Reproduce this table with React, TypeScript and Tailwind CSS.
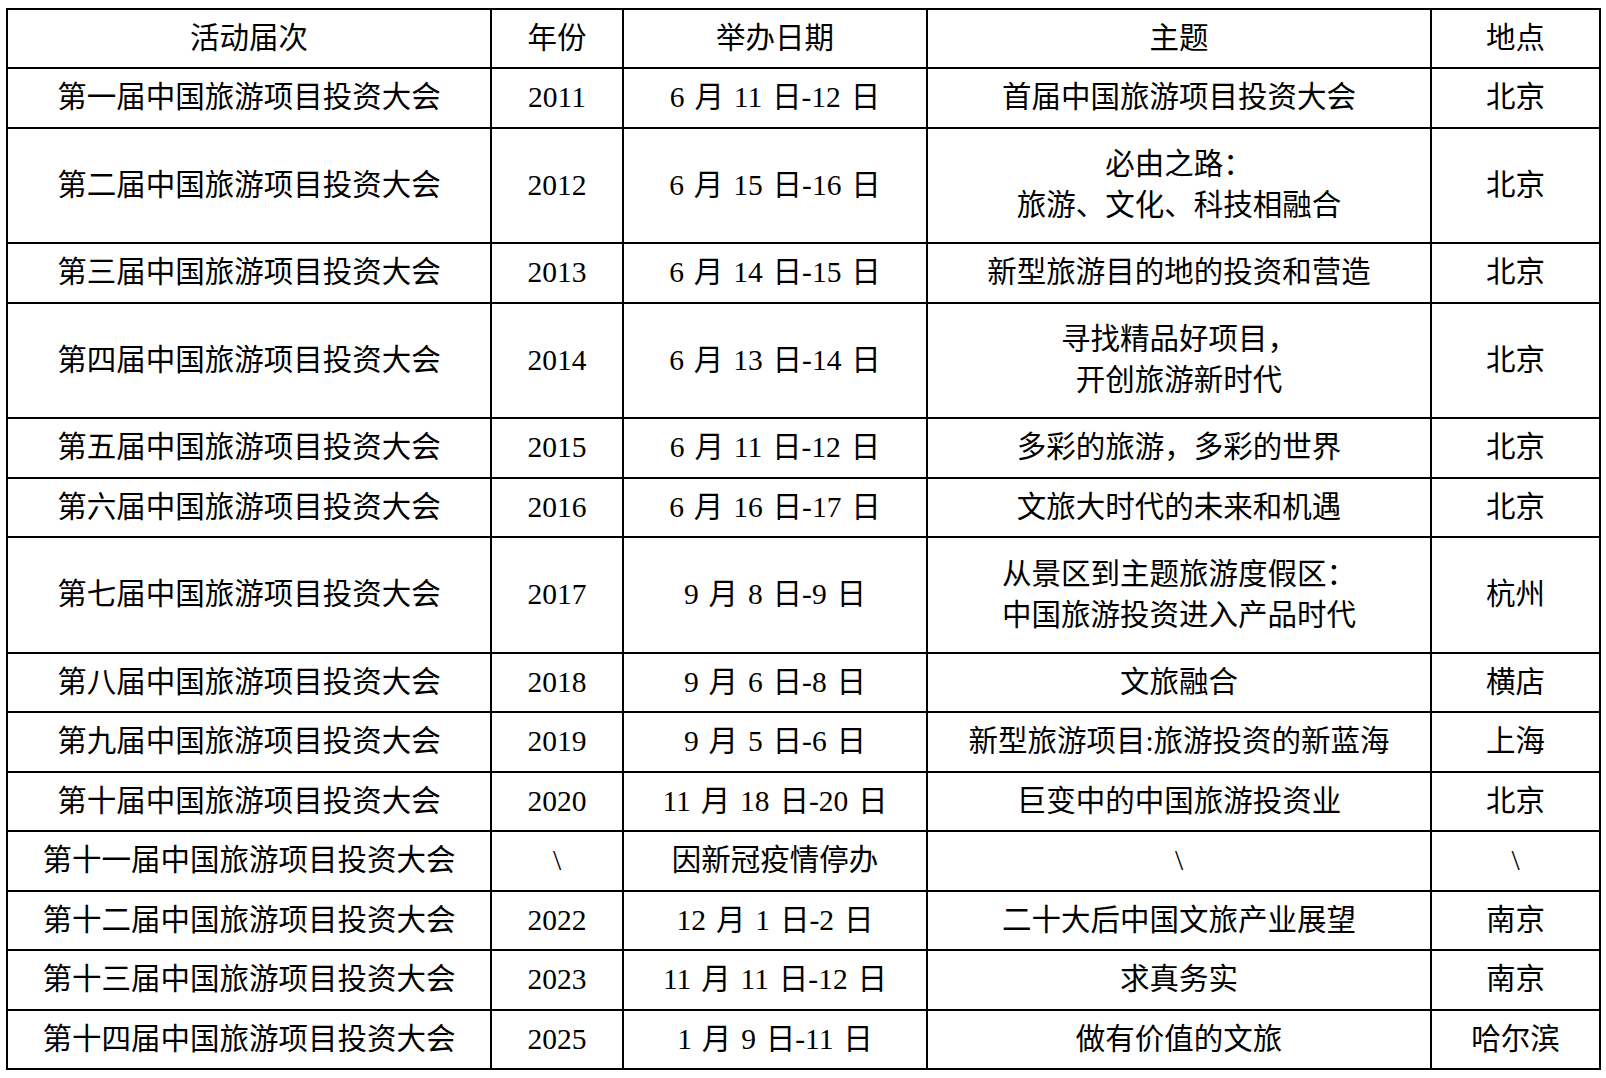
import React from "react";

type Row = { name: string; year: string; date: string; theme: string[]; place: string };

const rows: Row[] = [
  { name: "第一届中国旅游项目投资大会", year: "2011", date: "6 月 11 日-12 日", theme: ["首届中国旅游项目投资大会"], place: "北京" },
  { name: "第二届中国旅游项目投资大会", year: "2012", date: "6 月 15 日-16 日", theme: ["必由之路：", "旅游、文化、科技相融合"], place: "北京" },
  { name: "第三届中国旅游项目投资大会", year: "2013", date: "6 月 14 日-15 日", theme: ["新型旅游目的地的投资和营造"], place: "北京" },
  { name: "第四届中国旅游项目投资大会", year: "2014", date: "6 月 13 日-14 日", theme: ["寻找精品好项目，", "开创旅游新时代"], place: "北京" },
  { name: "第五届中国旅游项目投资大会", year: "2015", date: "6 月 11 日-12 日", theme: ["多彩的旅游，多彩的世界"], place: "北京" },
  { name: "第六届中国旅游项目投资大会", year: "2016", date: "6 月 16 日-17 日", theme: ["文旅大时代的未来和机遇"], place: "北京" },
  { name: "第七届中国旅游项目投资大会", year: "2017", date: "9 月 8 日-9 日", theme: ["从景区到主题旅游度假区：", "中国旅游投资进入产品时代"], place: "杭州" },
  { name: "第八届中国旅游项目投资大会", year: "2018", date: "9 月 6 日-8 日", theme: ["文旅融合"], place: "横店" },
  { name: "第九届中国旅游项目投资大会", year: "2019", date: "9 月 5 日-6 日", theme: ["新型旅游项目:旅游投资的新蓝海"], place: "上海" },
  { name: "第十届中国旅游项目投资大会", year: "2020", date: "11 月 18 日-20 日", theme: ["巨变中的中国旅游投资业"], place: "北京" },
  { name: "第十一届中国旅游项目投资大会", year: "\\", date: "因新冠疫情停办", theme: ["\\"], place: "\\" },
  { name: "第十二届中国旅游项目投资大会", year: "2022", date: "12 月 1 日-2 日", theme: ["二十大后中国文旅产业展望"], place: "南京" },
  { name: "第十三届中国旅游项目投资大会", year: "2023", date: "11 月 11 日-12 日", theme: ["求真务实"], place: "南京" },
  { name: "第十四届中国旅游项目投资大会", year: "2025", date: "1 月 9 日-11 日", theme: ["做有价值的文旅"], place: "哈尔滨" },
];

const cell = "border-2 border-black text-center align-middle p-0 whitespace-nowrap";

export default function App() {
  return (
    <div
      className="min-h-[1078px] w-[1606px] bg-white pl-[6px] pt-[8px] text-[29.5px] leading-[41px] text-black"
      style={{ fontFamily: "'Liberation Serif', 'Noto Sans CJK SC', serif" }}
    >
      <table className="table-fixed border-collapse w-[1593px]">
        <colgroup>
          <col className="w-[484px]" />
          <col className="w-[132px]" />
          <col className="w-[304px]" />
          <col className="w-[504px]" />
          <col className="w-[169px]" />
        </colgroup>
        <thead>
          <tr className="h-[59px]">
            <th className={`${cell} font-normal`}>活动届次</th>
            <th className={`${cell} font-normal`}>年份</th>
            <th className={`${cell} font-normal`}>举办日期</th>
            <th className={`${cell} font-normal`}>主题</th>
            <th className={`${cell} font-normal`}>地点</th>
          </tr>
        </thead>
        <tbody>
          {rows.map((r) => (
            <tr key={r.name} className={r.theme.length > 1 ? "h-[115.5px]" : "h-[59.5px]"}>
              <td className={cell}>{r.name}</td>
              <td className={cell}>{r.year}</td>
              <td className={`${cell} [word-spacing:2.5px]`}>{r.date}</td>
              <td className={cell}>
                {r.theme.map((t) => (
                  <div key={t}>{t}</div>
                ))}
              </td>
              <td className={cell}>{r.place}</td>
            </tr>
          ))}
        </tbody>
      </table>
    </div>
  );
}
